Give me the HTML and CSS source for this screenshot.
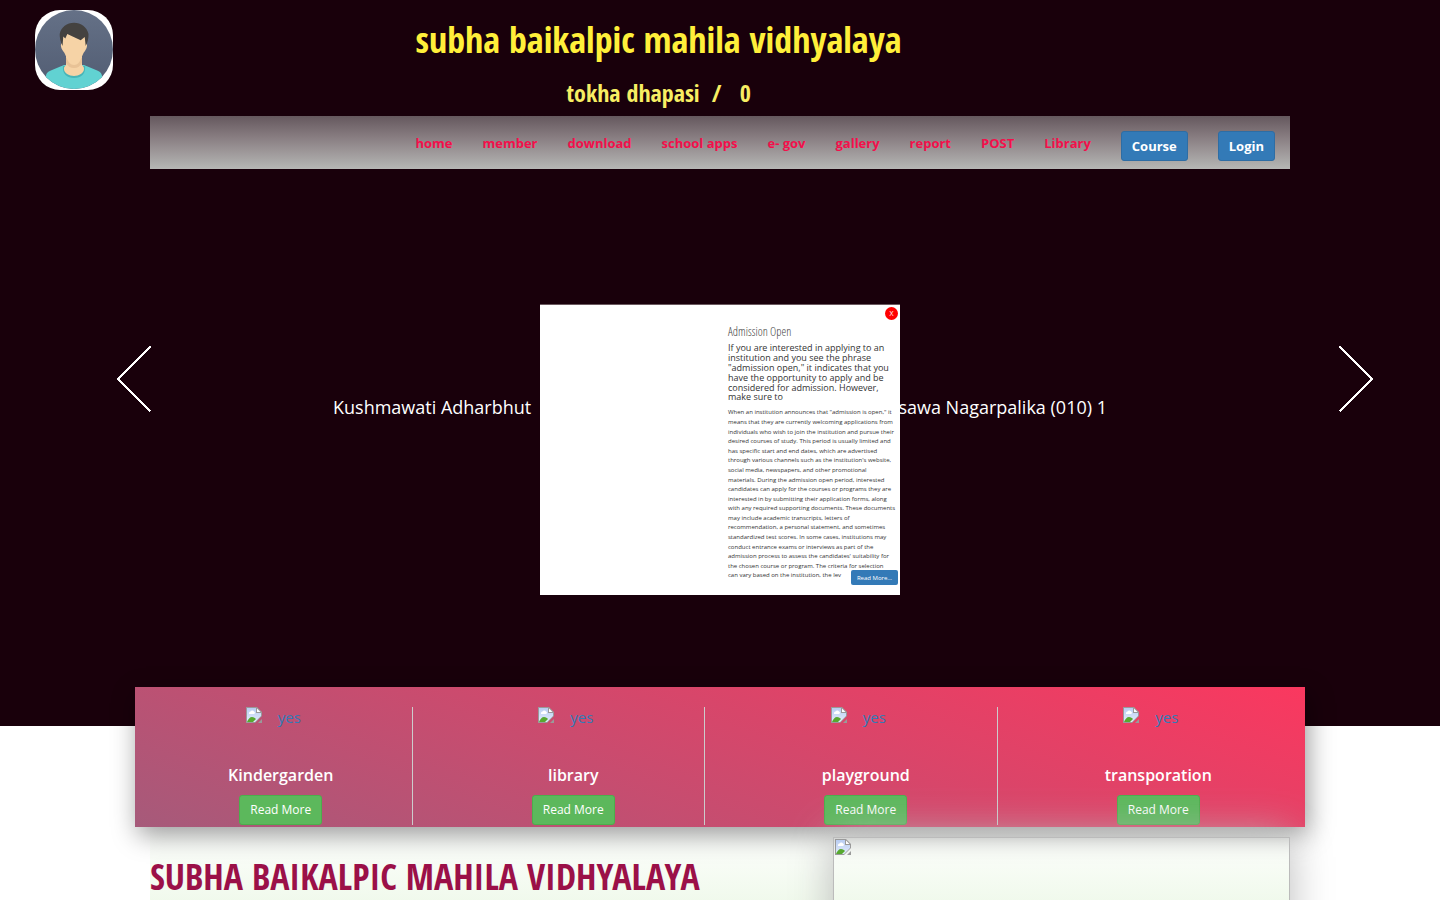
FILE: index.html
```html
<!DOCTYPE html>
<html lang="en">
<head>
<meta charset="utf-8">
<title>subha baikalpic mahila vidhyalaya</title>
<link rel="stylesheet" href="styles.css">
</head>
<body>
<svg class="defs" aria-hidden="true">
  <defs>
    <linearGradient id="sky" x1="0" y1="0" x2="0" y2="1"><stop offset="0" stop-color="#b9cdf2"/><stop offset="1" stop-color="#e2ebfb"/></linearGradient>
    <symbol id="missing" viewBox="0 0 16 16">
      <path d="M0 0h11l5 5v4L9 16H0z" fill="#9a9a9a"/>
      <path d="M1 1h9v5h5v3l-6 6H1z" fill="url(#sky)"/>
      <path d="M11 1.500v3.500h3.500z" fill="#fff"/>
      <path d="M3 6a1.500 1.500 0 0 1 1.500-1.500 2 2 0 0 1 3.500 0A1.300 1.300 0 0 1 8 7H3z" fill="#fff"/>
      <path d="M1 15c1-3 3-5 5-5s3 1 4 2l-3 3z" fill="#57a92f"/>
      <path d="M16 12v4h-4z" fill="#9a9a9a"/>
    </symbol>
  </defs>
</svg>

<div class="hero">
  <header class="masthead">
    <svg class="logo" viewBox="0 0 78 80" role="img" aria-label="School logo">
      <defs>
        <linearGradient id="disc" x1="0" y1="0" x2="0" y2="1"><stop offset="0" stop-color="#657187"/><stop offset="1" stop-color="#515c72"/></linearGradient>
        <clipPath id="round"><ellipse cx="39" cy="39.500" rx="39" ry="39.500"/></clipPath>
      </defs>
      <rect width="78" height="80" fill="#fff"/>
      <ellipse cx="39" cy="39.500" rx="39" ry="39.500" fill="url(#disc)"/>
      <g clip-path="url(#round)">
        <path d="M11 80V66c0-3 3-5 6-6l12-5h20l12 5c3 1 6 3 6 6v14z" fill="#61d2d2"/>
        <path d="M28 56c-1 8 4 12 11 12s12-4 11-12z" fill="#46b5b8"/>
        <path d="M31 46h16v9c1 2 2 1 2 4 0 4-5 7-10 7s-10-3-10-7c0-3 1-2 2-4z" fill="#f6d3a6"/>
        <path d="M31 48h16v5c-2 3-4 5-8 5s-6-2-8-5z" fill="#e8c296"/>
        <path d="M27 24h24v9c2 1 1 5-1 8-2 2-3 6-5 10-2 3-4 4-6 4s-4-1-6-4c-2-4-3-8-5-10-2-3-3-7-1-8z" fill="#f6d3a6"/>
        <path d="M27.500 36c-2-4-3-9-2.800-12C26 17 32 12.700 39 12.700S52 17 53.500 24c.2 4-1 9-2.800 12l-1-9-4 3.200L32.300 24l-2 4.500-2-2z" fill="#444240"/>
      </g>
    </svg>
    <div class="names">
      <h1>subha baikalpic mahila vidhyalaya</h1>
      <h3>tokha dhapasi&nbsp; / &nbsp; 0</h3>
    </div>
  </header>

  <nav class="menu">
    <a href="#">home</a>
    <a href="#">member</a>
    <a href="#">download</a>
    <a href="#">school apps</a>
    <a href="#">e- gov</a>
    <a href="#">gallery</a>
    <a href="#">report</a>
    <a href="#">POST</a>
    <a href="#">Library</a>
    <button type="button">Course</button>
    <button type="button">Login</button>
  </nav>

  <section class="slider">
    <button type="button" class="arrow" aria-label="Previous"><svg viewBox="0 0 34 66"><path d="M33.500.5 1 33l32.500 32.500"/></svg></button>
    <p class="caption"><span>Kushmawati Adharbhut</span><span>sawa Nagarpalika (010) 1</span></p>
    <button type="button" class="arrow" aria-label="Next"><svg viewBox="0 0 34 66"><path d="M.5.5 33 33 .5 65.500"/></svg></button>
  </section>
</div>

<section class="features">
  <div class="feature"><a href="#"><svg class="broken"><use href="#missing"/></svg>yes</a><h4>Kindergarden</h4><button type="button">Read More</button></div>
  <div class="feature"><a href="#"><svg class="broken"><use href="#missing"/></svg>yes</a><h4>library</h4><button type="button">Read More</button></div>
  <div class="feature"><a href="#"><svg class="broken"><use href="#missing"/></svg>yes</a><h4>playground</h4><button type="button">Read More</button></div>
  <div class="feature"><a href="#"><svg class="broken"><use href="#missing"/></svg>yes</a><h4>transporation</h4><button type="button">Read More</button></div>
</section>

<main class="about">
  <h2>SUBHA BAIKALPIC MAHILA VIDHYALAYA</h2>
  <div class="photo"><svg class="broken"><use href="#missing"/></svg></div>
</main>

<div class="modal" role="dialog" aria-labelledby="modal-title">
  <div class="modal-body">
    <h3 id="modal-title">Admission Open</h3>
    <h4>If you are interested in applying to an institution and you see the phrase "admission open," it indicates that you have the opportunity to apply and be considered for admission. However, make sure to</h4>
    <p>When an institution announces that "admission is open," it<br>
    means that they are currently welcoming applications from<br>
    individuals who wish to join the institution and pursue their<br>
    desired courses of study. This period is usually limited and<br>
    has specific start and end dates, which are advertised<br>
    through various channels such as the institution's website,<br>
    social media, newspapers, and other promotional<br>
    materials. During the admission open period, interested<br>
    candidates can apply for the courses or programs they are<br>
    interested in by submitting their application forms, along<br>
    with any required supporting documents. These documents<br>
    may include academic transcripts, letters of<br>
    recommendation, a personal statement, and sometimes<br>
    standardized test scores. In some cases, institutions may<br>
    conduct entrance exams or interviews as part of the<br>
    admission process to assess the candidates' suitability for<br>
    the chosen course or program. The criteria for selection<br>
    can vary based on the institution, the lev</p>
  </div>
  <button type="button" class="close" aria-label="Close">X</button>
  <button type="button" class="more">Read More...</button>
</div>
</body>
</html>
```
FILE: styles.css
```css
* { box-sizing: border-box; }

body {
  margin: 0;
  background: #fff;
  color: #333;
  font-family: "Open Sans", sans-serif;
  font-size: 15px;
}

h1, h2, h3, h4, p { margin: 0; }
button { font-family: inherit; cursor: pointer; }
a { text-decoration: none; }
.defs { position: absolute; width: 0; height: 0; }

.hero { background: #19000b; min-height: 726px; }

.masthead {
  display: flex;
  height: 116px;
  padding: 10px 236px 0 35px;
}
.logo { width: 78px; height: 80px; border-radius: 25px; }
.names {
  flex: 1;
  text-align: center;
  font-family: "Open Sans Condensed", "Open Sans", sans-serif;
}
.names h1 { margin-top: 10px; color: #ffef3a; font-size: 36px; line-height: 40px; font-weight: 700; }
.names h3 { margin-top: 20px; color: #f7ee63; font-size: 24px; line-height: 26px; font-weight: 700; }

.menu {
  display: flex;
  justify-content: flex-end;
  gap: 30px;
  width: 1140px;
  max-width: 100%;
  height: 53px;
  margin: 0 auto;
  padding: 15px 15px 0;
  background: linear-gradient(#65585e, #887d81 40%, #b6b7b5);
}
.menu a {
  color: #f30f4b;
  font-size: 13px;
  line-height: 24px;
  font-weight: 700;
}
.menu button {
  height: 30px;
  padding: 0 10px;
  border: 1px solid #2e6da4;
  border-radius: 3px;
  background: #337ab7;
  color: #fff;
  font-size: 13px;
  line-height: 20px;
  font-weight: 700;
}

.slider {
  display: flex;
  justify-content: space-between;
  align-items: flex-start;
  padding: 177px 67px 0 117px;
}
.arrow { display: block; padding: 0; border: 0; background: none; }
.arrow svg {
  display: block;
  width: 34px;
  height: 66px;
  fill: none;
  stroke: #fff;
  stroke-width: 2;
  shape-rendering: crispEdges;
}
.caption {
  display: flex;
  justify-content: space-between;
  width: 774px;
  margin: 49px 50px 0 0;
  color: #fff;
  font-size: 18px;
  line-height: 25px;
}

.features {
  position: relative;
  display: grid;
  grid-template-columns: repeat(4, 1fr);
  width: 1170px;
  max-width: 100%;
  margin: -39px auto 0;
  padding: 20px 0 2px;
  background: linear-gradient(20deg, #a65a7a, #fa385f);
  box-shadow: 3px 8px 24px rgba(0, 0, 0, .4);
}
.feature {
  display: flex;
  flex-direction: column;
  align-items: center;
  margin: 0 15px;
  border-right: 1px solid #ccc;
}
.feature:last-child { border-right-color: transparent; }
.feature a {
  display: flex;
  gap: 16px;
  height: 58px;
  margin-right: 15px;
  color: #337ab7;
  line-height: 21px;
}
.broken { display: block; width: 16px; height: 16px; }
.feature h4 { color: #fff; font-size: 16px; line-height: 20px; font-weight: 600; }
.feature button {
  height: 30px;
  margin-top: 10px;
  padding: 0 10px 2px;
  border: 1px solid #4cae4c;
  border-radius: 3px;
  background: #5cb85c;
  color: #fff;
  font-size: 12px;
}

.about {
  display: grid;
  grid-template-columns: 1fr 457px;
  width: 1140px;
  max-width: 100%;
  margin: 0 auto;
  padding-top: 10px;
  background: linear-gradient(#fff, #edf8e8 90px);
}
.about h2 {
  margin-top: 20px;
  color: #9b1048;
  font-family: "Open Sans Condensed", "Open Sans", sans-serif;
  font-size: 36px;
  line-height: 40px;
  font-weight: 700;
}
.photo {
  position: relative;
  height: 300px;
  padding: 1px;
  border: 1px solid #bbb;
  box-shadow: 0 0 40px #bbb;
}

.modal {
  position: fixed;
  top: 50%;
  left: 50%;
  width: 360px;
  height: 291px;
  margin: -146px 0 0 -180px;
  padding: 20px 2px 0 188px;
  border-top: 1px solid #6b595f;
  background: #fff;
}
.modal h3 {
  color: #444;
  font-family: "Open Sans Condensed Light", "Open Sans Condensed", "Open Sans", sans-serif;
  font-size: 12px;
  line-height: 13px;
  font-weight: 300;
}
.modal h4 { margin-top: 5px; font-size: 9px; line-height: 1.1; font-weight: 400; }
.modal p { margin-top: 6px; font-size: 6px; line-height: 1.6; white-space: nowrap; }
.close, .more { position: absolute; border: 0; color: #fff; padding: 0; }
.close { top: 2px; right: 2px; width: 13px; height: 13px; border-radius: 50%; background: #f00; font-size: 7px; }
.more { right: 2px; bottom: 10px; width: 47px; height: 15px; border-radius: 2px; background: #337ab7; font-size: 6px; }
```
